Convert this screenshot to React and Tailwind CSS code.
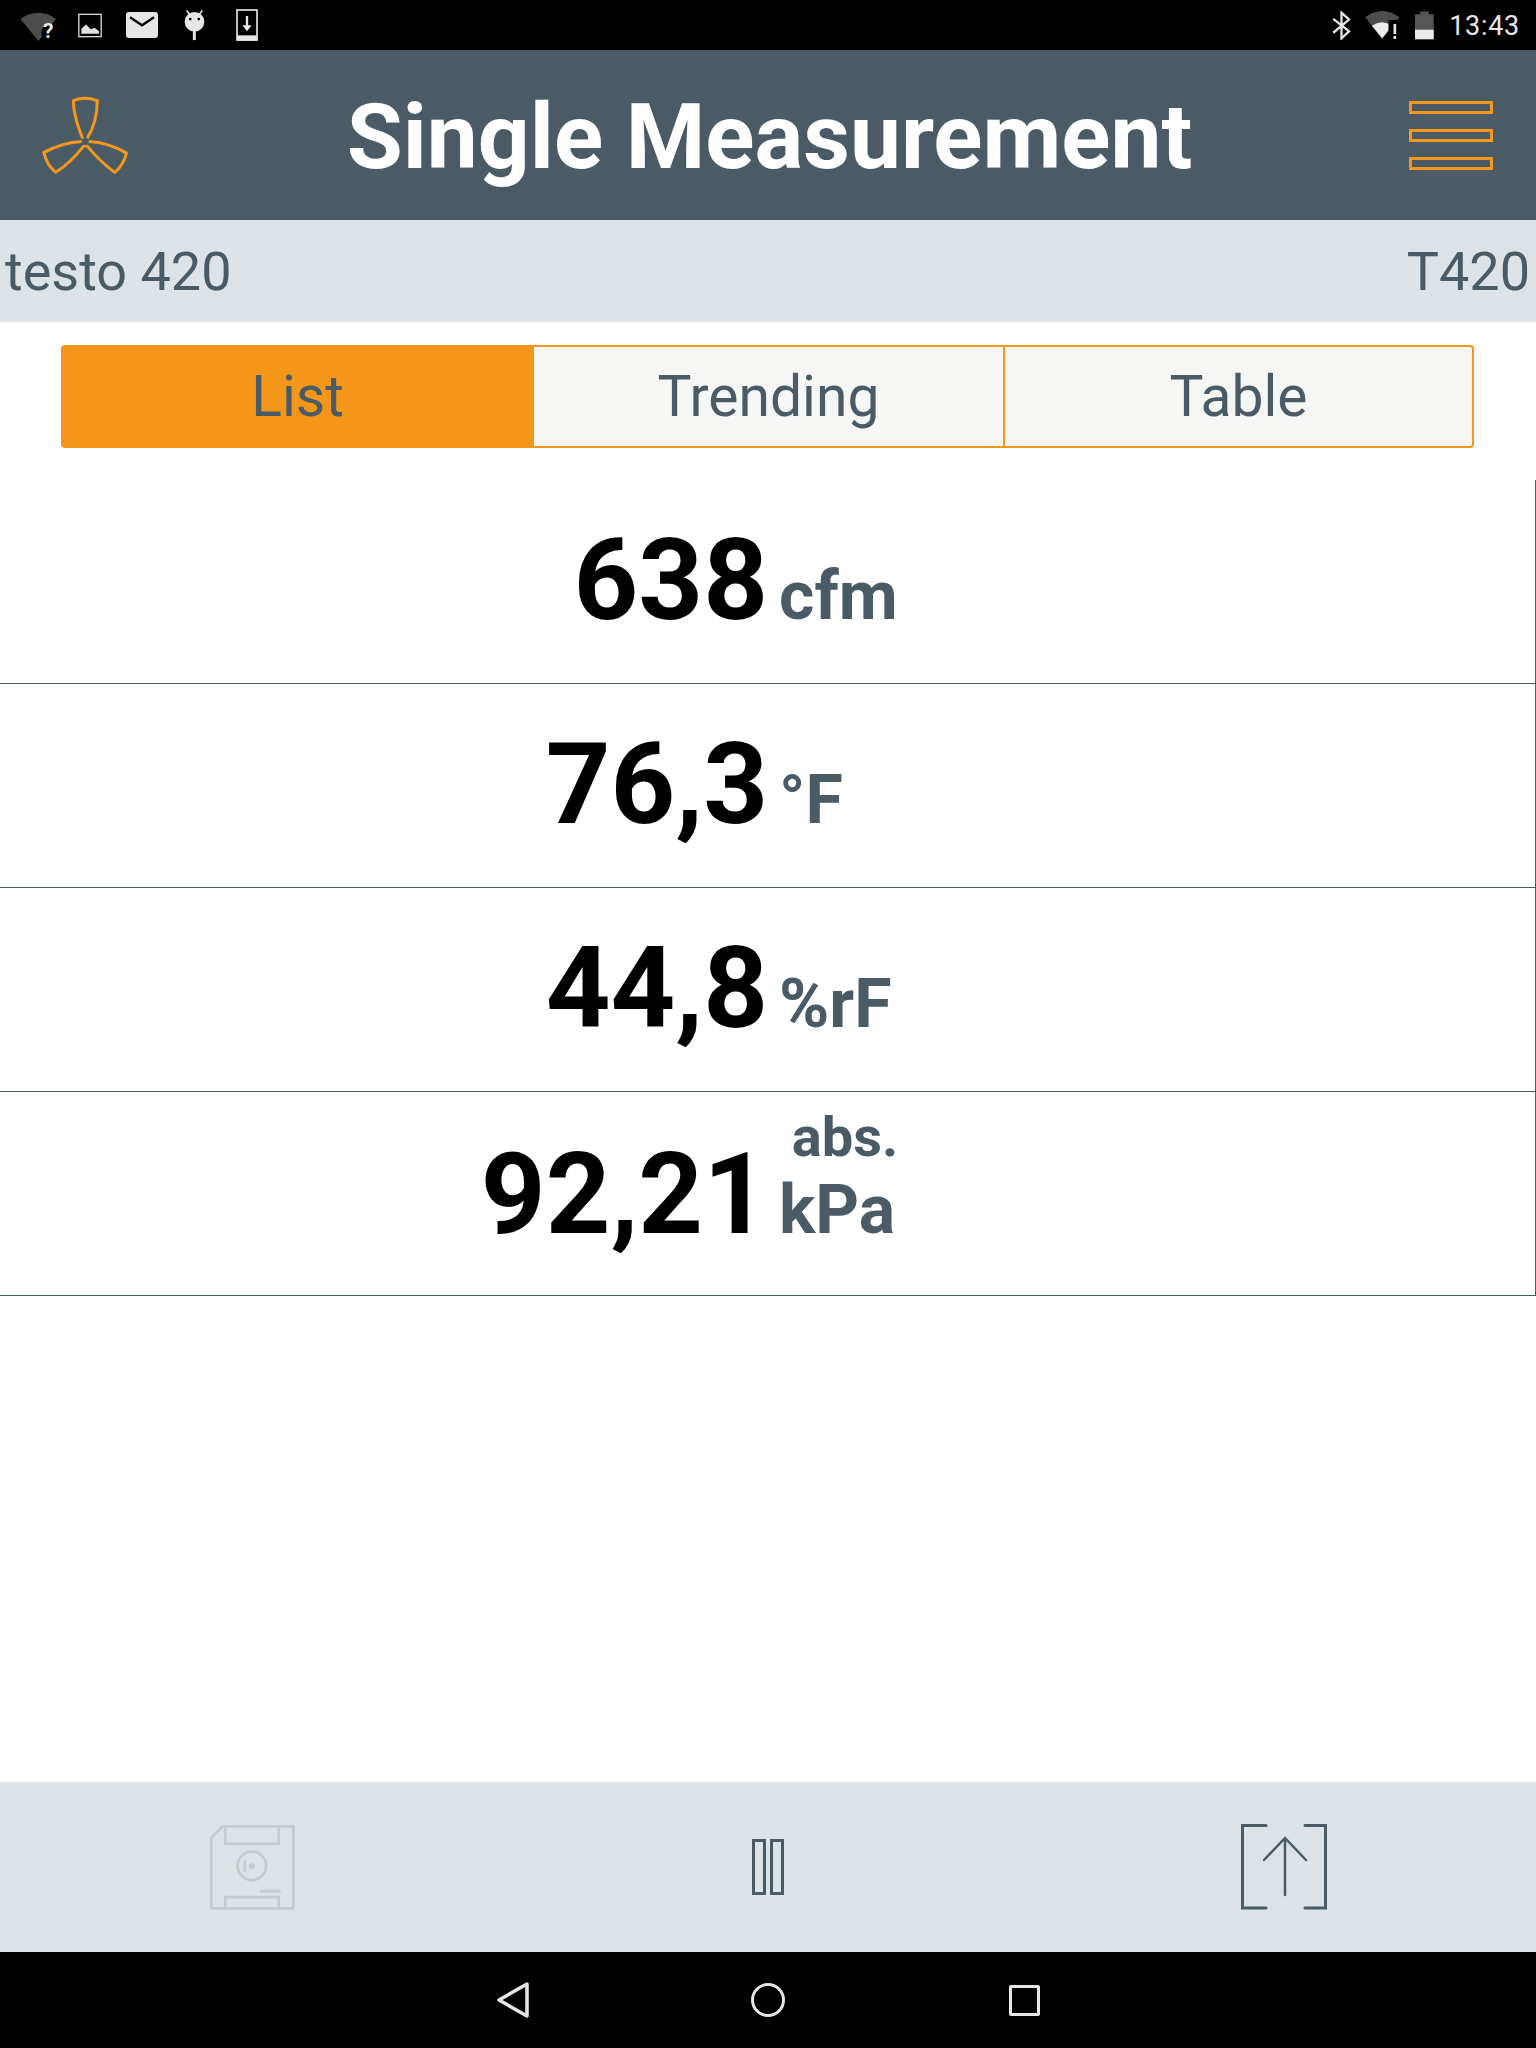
import React from 'react';

const rows = [
  { value: '638', unit: 'cfm' },
  { value: '76,3', unit: '°F' },
  { value: '44,8', unit: '%rF' },
  { value: '92,21', unit: 'kPa', note: 'abs.' },
];

function WifiUnknown() {
  return (
    <div className="relative w-[37px] h-[33px] ml-[20px]">
      <svg viewBox="60 20 110 100" className="w-[37px] h-[33px]">
        <path d="M60 50 Q115 12 168 50 L115 117 Z" fill="#4d4d4d" />
        <circle cx="147" cy="92" r="24" fill="#000" />
      </svg>
      <span className="absolute left-[23px] top-[10px] text-[21px] leading-[24px] font-bold text-[#e8e8e8]">?</span>
    </div>
  );
}

function ImageIcon() {
  return (
    <svg viewBox="234 38 72 74" className="w-[24px] h-[25px] ml-[21px]">
      <rect x="236.5" y="41.5" width="67" height="67" fill="none" stroke="#d8d8d8" strokeWidth="4" />
      <path d="M244 100 L244 85 L258 72 L272 86 L284 82 L297 92 L297 100 Z" fill="#e0e0e0" />
    </svg>
  );
}

function MailIcon() {
  return (
    <svg viewBox="378 36 96 78" className="w-[32px] h-[26px] ml-[24px]">
      <rect x="378" y="36" width="96" height="78" rx="9" fill="#e6e6e6" />
      <path d="M390 52 L426 76 L462 52" fill="none" stroke="#000" strokeWidth="7" />
    </svg>
  );
}

function AndroidIcon() {
  return (
    <svg viewBox="550 28 64 96" className="w-[21px] h-[32px] ml-[26px]">
      <circle cx="582" cy="66" r="30" fill="#e6e6e6" />
      <path d="M558 32 L568 44 M606 32 L596 44" stroke="#e6e6e6" strokeWidth="5" />
      <rect x="577" y="92" width="9" height="30" fill="#e6e6e6" />
      <circle cx="569" cy="58" r="4" fill="#000" />
      <circle cx="595" cy="58" r="4" fill="#000" />
    </svg>
  );
}

function DownloadIcon() {
  return (
    <svg viewBox="705 27 66 96" className="w-[22px] h-[32px] ml-[31px]">
      <rect x="708" y="30" width="60" height="90" fill="none" stroke="#e6e6e6" strokeWidth="5" />
      <rect x="708" y="106" width="60" height="16" fill="#e6e6e6" />
      <path d="M738 48 L738 80" stroke="#e6e6e6" strokeWidth="7" />
      <path d="M724 76 L752 76 L738 94 Z" fill="#e6e6e6" />
    </svg>
  );
}

function BluetoothIcon() {
  return (
    <svg viewBox="102 32 56 88" className="w-[19px] h-[29px]">
      <path d="M105 56 L153 94 L130 115 L130 37 L153 58 L105 98" fill="none" stroke="#e6e6e6" strokeWidth="7" />
    </svg>
  );
}

function WifiAlert() {
  return (
    <svg viewBox="200 30 104 90" className="w-[35px] h-[30px] ml-[14px]">
      <path d="M200 52 Q250 14 303 52 L251 117 Z" fill="#4d4d4d" />
      <path d="M220 77 Q250 56 281 77 L251 115 Z" fill="#ececec" />
      <rect x="270" y="60" width="34" height="60" fill="#000" />
      <rect x="285" y="72" width="8" height="30" fill="#e6e6e6" />
      <rect x="285" y="108" width="8" height="9" fill="#e6e6e6" />
    </svg>
  );
}

function BatteryIcon() {
  return (
    <svg viewBox="348 30 58 88" className="w-[19px] h-[29px] ml-[15px]">
      <path d="M348 40 L364 40 L364 31 L390 31 L390 40 L405 40 L405 116 L348 116 Z" fill="#565656" />
      <rect x="348" y="87" width="57" height="29" fill="#ececec" />
    </svg>
  );
}

function FanIcon() {
  return (
    <svg viewBox="120 280 270 250" className="w-[90px] h-[83px] shrink-0" fill="none" stroke="#f5971a" strokeWidth="9" strokeLinejoin="round">
      <path d="M248 415 C232 375 220 340 220 300 Q255 286 292 300 C292 340 282 380 262 413" />
      <path d="M266 423 C310 425 350 440 380 458 Q370 495 345 516 C315 495 285 465 262 437 L251 437 C225 470 197 497 167 516 Q140 495 131 456 C165 438 205 425 245 423" />
    </svg>
  );
}

function SaveIcon() {
  return (
    <svg viewBox="90 72 256 256" className="w-[85px] h-[85px]" fill="none" stroke="#c3cdd0" strokeWidth="8">
      <path d="M94 110 L128 76 L341 76 L341 323 L94 323 Z" strokeLinejoin="round" />
      <path d="M136 76 L136 129 L297 129 L297 76" />
      <path d="M136 323 L136 289 L297 289 L297 323" />
      <circle cx="216" cy="195" r="43" />
      <path d="M195 180 L195 212" />
      <circle cx="216" cy="196" r="5" fill="#c3cdd0" />
      <path d="M243 271 L300 271" strokeLinecap="round" />
    </svg>
  );
}

function UploadIcon() {
  return (
    <svg viewBox="0 0 86 86" className="w-[86px] h-[86px]" fill="none" stroke="#4a5b65" strokeLinecap="round">
      <path d="M25 1.5 L1.5 1.5 L1.5 84 L25 84 M64 1.5 L84.5 1.5 L84.5 84 L64 84" strokeWidth="3" />
      <path d="M44 71 L44 14 M23 36 L44 14 L65 36" strokeWidth="2.5" />
    </svg>
  );
}

export default function App() {
  return (
    <div className="w-[1536px] h-[2048px] flex flex-col bg-white font-['Roboto',sans-serif] overflow-hidden">
      {/* status bar */}
      <div className="h-[50px] bg-black flex items-center shrink-0">
        <WifiUnknown />
        <ImageIcon />
        <MailIcon />
        <AndroidIcon />
        <DownloadIcon />
        <div className="flex-1" />
        <BluetoothIcon />
        <WifiAlert />
        <BatteryIcon />
        <span className="ml-[15px] mr-[16px] pt-[1px] text-[27px] tracking-[0.7px] leading-[50px] text-[#e6e6e6]">13:43</span>
      </div>

      <div className="h-[170px] bg-[#4a5b65] flex items-center pl-[40px] pr-[43px] shrink-0">
        <FanIcon />
        <h1 className="flex-1 text-center text-[91px] leading-none font-bold text-white pt-[4px]">Single Measurement</h1>
        <div className="w-[84px] flex flex-col gap-[15px]">
          <div className="h-[13px] border-[3px] border-[#f5971a]" />
          <div className="h-[13px] border-[3px] border-[#f5971a]" />
          <div className="h-[13px] border-[3px] border-[#f5971a]" />
        </div>
      </div>

      <div className="h-[102px] bg-[#dee3e7] flex items-center justify-between pl-[5px] pr-[6px] text-[54px] leading-[60px] text-[#4a5b65] shrink-0">
        <span className="pt-[2px]">testo 420</span>
        <span className="pt-[2px]">T420</span>
      </div>

      <div className="mt-[23px] ml-[61px] mr-[62px] h-[103px] flex text-[57px] leading-none text-[#4a5b65] shrink-0">
        <div className="w-[473px] flex items-center justify-center bg-[#f4961a] rounded-l-[4px]">List</div>
        <div className="w-[471px] flex items-center justify-center bg-[#f6f6f4] border-y-2 border-r-2 border-[#f5971a]">Trending</div>
        <div className="flex-1 flex items-center justify-center bg-[#f6f6f4] border-y-2 border-r-2 border-[#f5971a] rounded-r-[4px]">Table</div>
      </div>

      <div className="mt-[32px] border-r border-[#4a5b65] shrink-0">
        {rows.map(r => (
          <div key={r.value} className={`h-[204px] border-b border-[#4a5b65] flex items-baseline ${r.note ? 'pt-[43px]' : 'pt-[41px]'}`}>
            <span className="w-[768px] text-right text-[113px] leading-[120px] font-bold text-black">{r.value}</span>
            <span className="ml-[11px] relative text-[68px] leading-none font-bold text-[#4a5b65]">
              {r.note && <span className="absolute right-[-3px] bottom-[79px] text-[56px] leading-none">{r.note}</span>}
              {r.unit}
            </span>
          </div>
        ))}
      </div>

      <div className="flex-1" />

      <div className="h-[170px] bg-[#dee3e7] flex items-center shrink-0">
        <div className="ml-[210px]"><SaveIcon /></div>
        <div className="ml-[457px] w-[32px] h-[56px] flex justify-between">
          <div className="w-[14px] border-[3px] border-[#4a5b65]" />
          <div className="w-[14px] border-[3px] border-[#4a5b65]" />
        </div>
        <div className="ml-[457px]"><UploadIcon /></div>
      </div>

      <div className="h-[96px] bg-black flex items-center shrink-0">
        <svg viewBox="0 0 32 36" className="ml-[497px] w-[32px] h-[36px]" fill="none" stroke="#e6e6e6" strokeWidth="3.5" strokeLinejoin="round">
          <path d="M30 2 L2 18 L30 34 Z" />
        </svg>
        <div className="ml-[222px] w-[34px] h-[34px] rounded-full border-[3px] border-[#e6e6e6]" />
        <div className="ml-[224px] w-[31px] h-[31px] rounded-[2px] border-[3px] border-[#e6e6e6]" />
      </div>
    </div>
  );
}
